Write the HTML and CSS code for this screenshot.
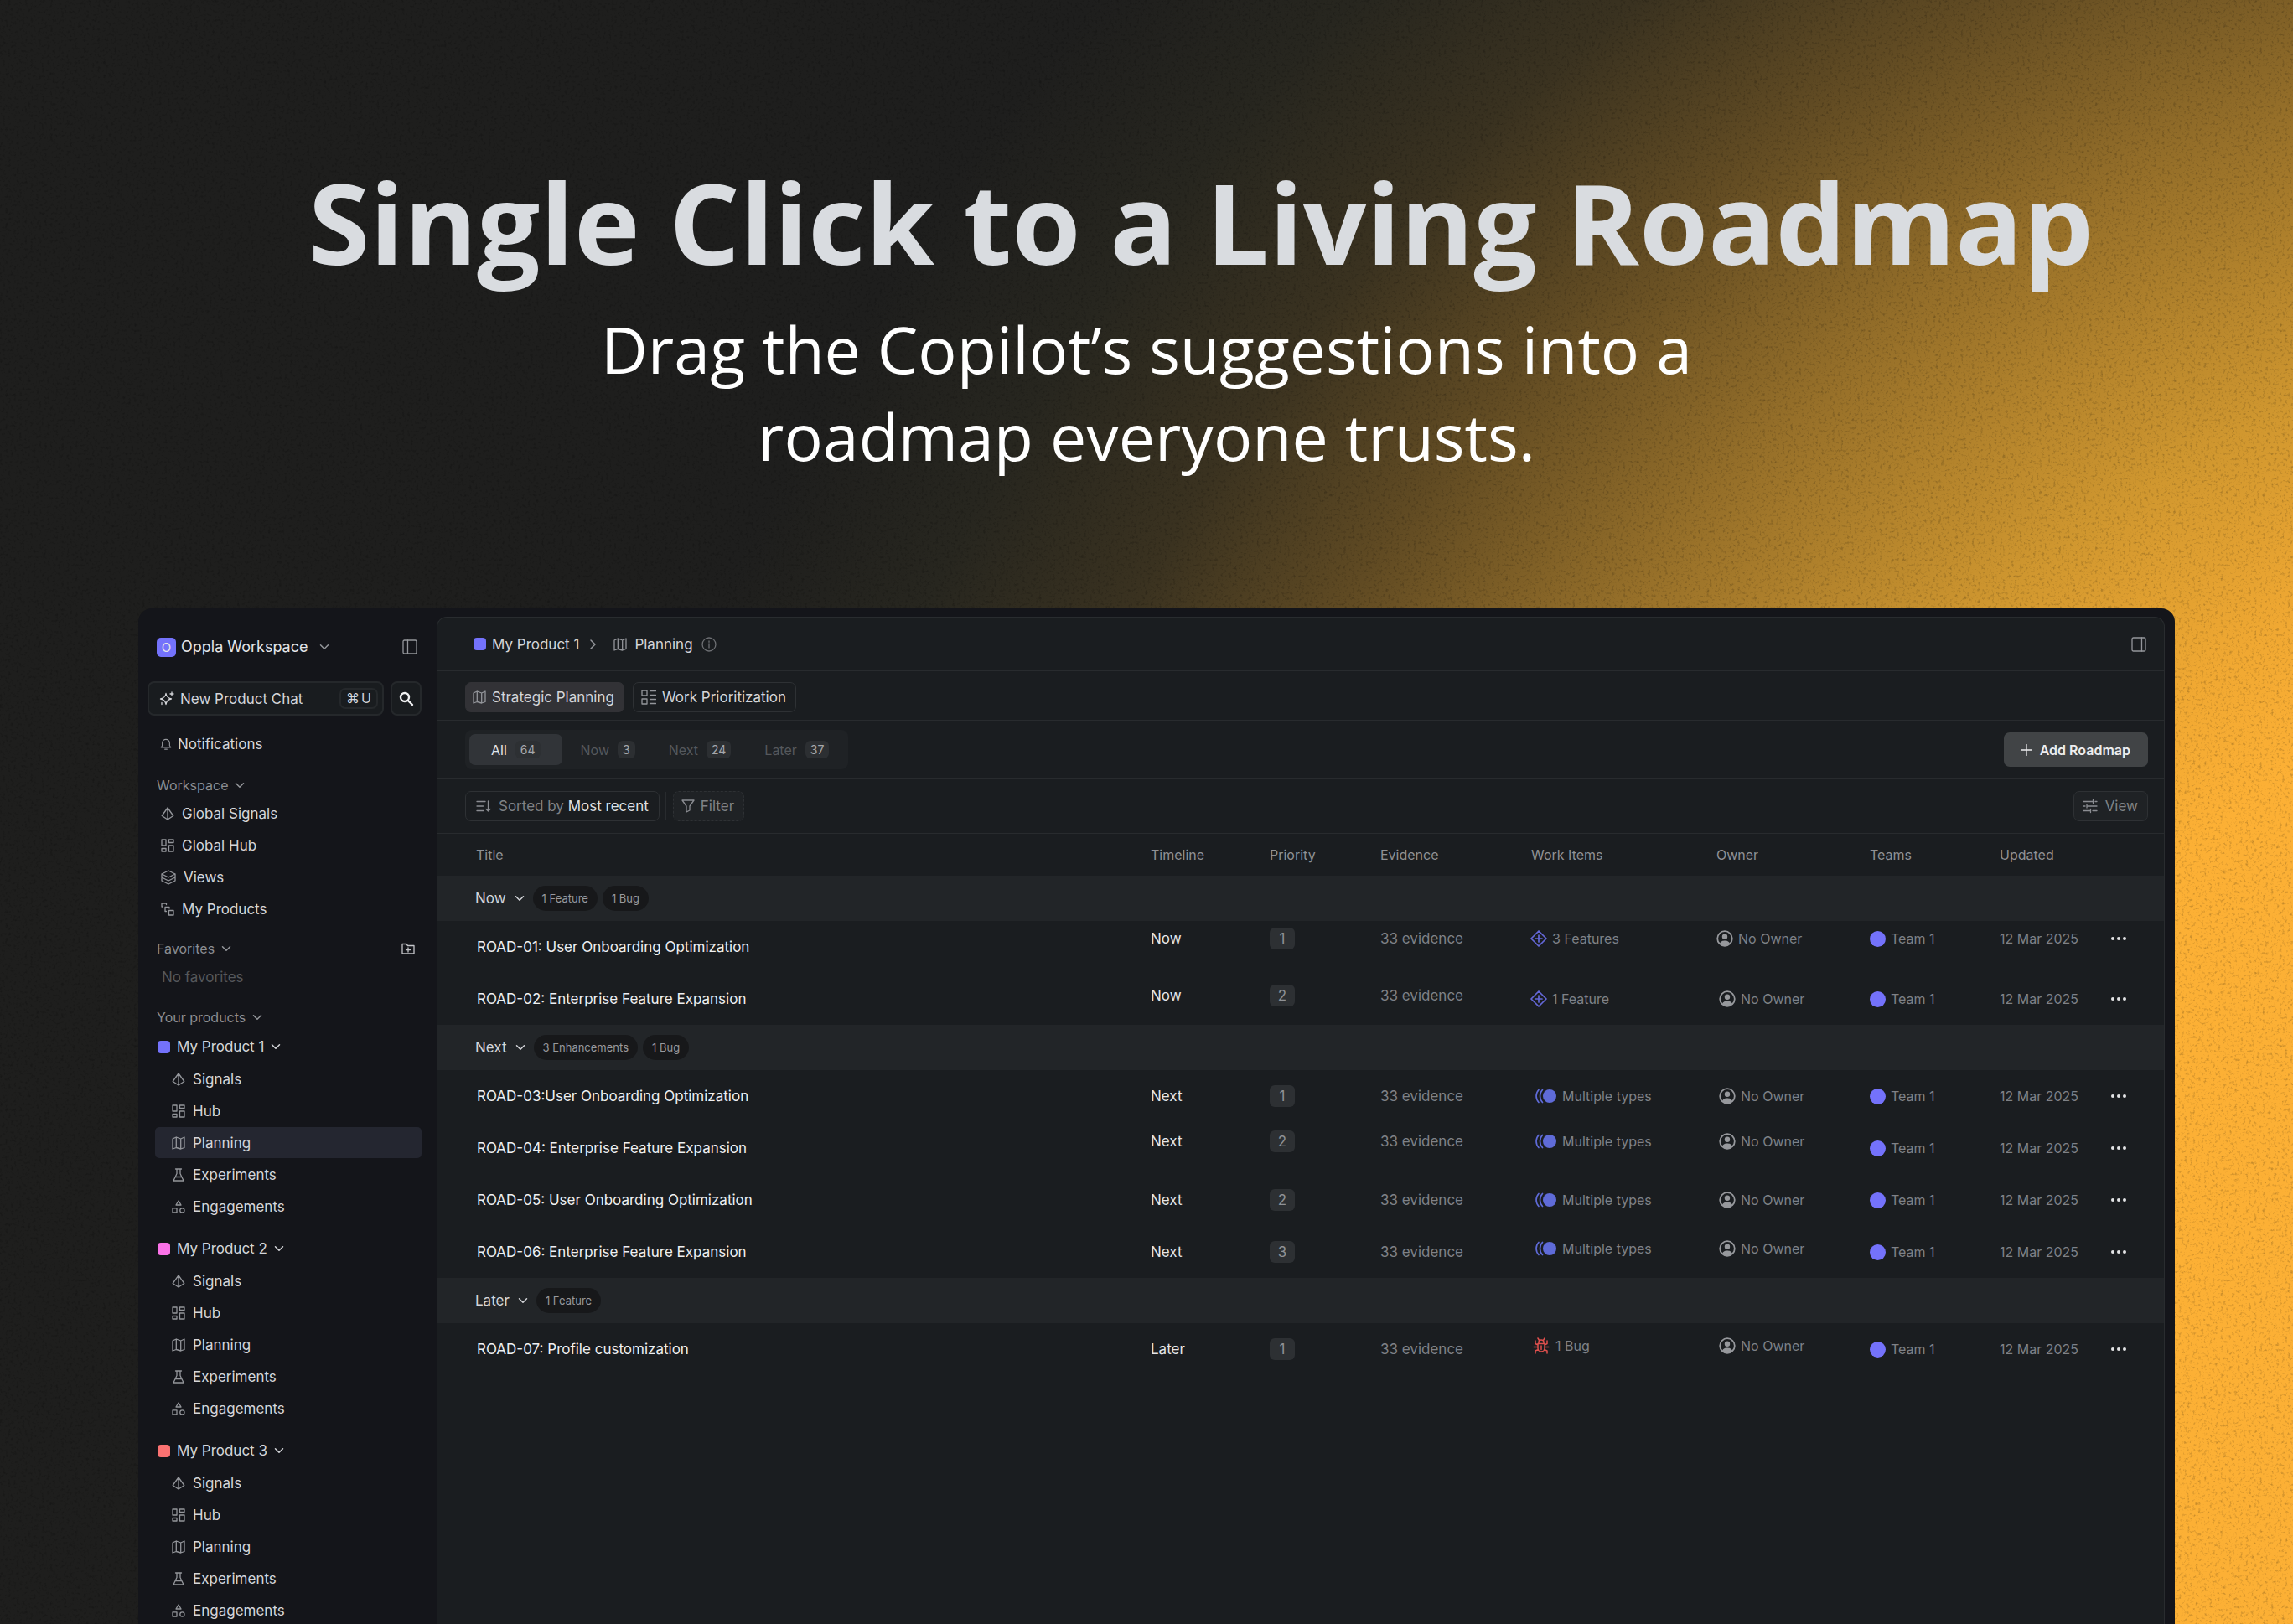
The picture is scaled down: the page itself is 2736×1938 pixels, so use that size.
FILE: index.html
```
<!DOCTYPE html>
<html lang="en">
  <head>
    <meta charset="UTF-8" />
    <title>Oppla - Planning</title>
    <link rel="stylesheet" href="styles.css">
  </head>
  <body>
    <!-- icon set -->
    <svg class="sprite" aria-hidden="true">
      <symbol id="i-chevron" viewBox="0 0 12 12"><path d="M1.5 3.8 6 8.3l4.500-4.500" /></symbol>
      <symbol id="i-right" viewBox="0 0 12 12"><path d="M4 1l5 5-5 5" /></symbol>
      <symbol id="i-panel" viewBox="0 0 18 18"><rect x="1" y="1" width="16" height="16" rx="1.500" /><path d="M6.500 1v16" /></symbol>
      <symbol id="i-panel-right" viewBox="0 0 18 18"><rect x="1" y="1" width="16" height="16" rx="1.500" /><path d="M12.500 1v16" /></symbol>
      <symbol id="i-spark" viewBox="0 0 18 18"><path d="M8 2.500c.8 4.200 2.200 5.700 6.500 6.500-4.300.8-5.700 2.300-6.500 6.500C7.200 11.300 5.700 9.800 1.500 9 5.700 8.200 7.200 6.700 8 2.500zM15 1v4M13 3h4M3 13.500v2" /></symbol>
      <symbol id="i-search" viewBox="0 0 18 18"><circle cx="7" cy="7" r="5" /><path d="M10.800 10.800 16 16" /></symbol>
      <symbol id="i-bell" viewBox="0 0 16 16"><path d="M1.500 12.500h13L13 10V6.500a5 5 0 0 0-10 0V10zM6.500 15h3" /></symbol>
      <symbol id="i-signal" viewBox="0 0 16 16"><path d="M8 1 1.200 10.500 8 15l6.800-4.500zM8 1v14" /></symbol>
      <symbol id="i-hub" viewBox="0 0 16 16"><path d="M1 1h5v7H1zM9.500 1H15v3.500H9.500zM1 11.500h5V15H1zM9.500 8H15v7H9.500z" /></symbol>
      <symbol id="i-layers" viewBox="0 0 18 18"><path d="M9 1 1 5l8 4 8-4zM1 9l8 4 8-4M1 13l8 4 8-4M1 5v4M17 5v4M1 9v4M17 9v4" /></symbol>
      <symbol id="i-steps" viewBox="0 0 16 16"><path d="M9.500 9.500H15V15H9.500zM6.500 10.500H5V5.500h5v1.500M2 5H1V1h5.500v1.500" /></symbol>
      <symbol id="i-folder" viewBox="0 0 16 16"><path d="M1 2.500h5l1.500 2H15v9.500H1zM8 7v5M5.500 9.500h5" /></symbol>
      <symbol id="i-map" viewBox="0 0 16 16"><path d="M1 3 5.300 1v12.500L1 15zM5.300 1l5.400 2v12l-5.400-1.500M10.700 3 15 1v12.500L10.700 15" /></symbol>
      <symbol id="i-flask" viewBox="0 0 14 16"><path d="M3.500 1h7M5 1v5.500L1 15h12L9 6.500V1M3.500 10.500h7" /></symbol>
      <symbol id="i-shapes" viewBox="0 0 16 16"><path d="M8 1 5 6h6zM1 9.800h5V15H1z" /><circle cx="12.400" cy="12.400" r="2.600" /></symbol>
      <symbol id="i-info" viewBox="0 0 18 18"><circle cx="9" cy="9" r="8" /><path d="M9 8v5M9 5v1.300" /></symbol>
      <symbol id="i-board" viewBox="0 0 18 18"><path d="M1 1h6v6H1zM1 11h6v6H1zM10.500 1.500H17.500M10.500 6.500H17.500M10.500 11.500H17.500M10.500 16.500H17.500" /></symbol>
      <symbol id="i-sort" viewBox="0 0 18 16"><path d="M1 2.500h10M1 8h7.500M1 13.500h8M14.500 2v12M12 11.500l2.500 2.500 2.500-2.500" /></symbol>
      <symbol id="i-filter" viewBox="0 0 16 16"><path d="M1 1h14L10 8v5l-4 2V8z" /></symbol>
      <symbol id="i-tune" viewBox="0 0 18 16"><path d="M1 2.500h11M15 2.500h2M12.500.500v4M1 8h2M6 8h11M5 6v4M1 13.500h8M12 13.500h5M9.500 11.500v4" /></symbol>
      <symbol id="i-plus" viewBox="0 0 14 14"><path d="M7 .500v13M.500 7h13" /></symbol>
      <symbol id="i-feature" viewBox="0 0 20 20"><path d="M10 1 19 10 10 19 1 10zM10 6v8M6 10h8" /></symbol>
      <symbol id="i-multi" viewBox="0 0 28 18"><circle cx="19" cy="9" r="8" fill="currentColor" stroke="none" /><path d="M12 1.500a11 11 0 0 0 0 15M7.500 1.500a11 11 0 0 0 0 15" transform="translate(-1.500 0)" /></symbol>
      <symbol id="i-bug" viewBox="0 0 20 20"><path d="M6 7.500h8V13a4 4 0 0 1-8 0zM7 7.500V6a3 3 0 0 1 6 0v1.500M7.500 3.500 6 1M12.500 3.500 14 1M6 9 3 7.500V4M14 9l3-1.500V4M6 11.500H1M14 11.500h5M6.500 14.500 3 16v3M13.500 14.500 17 16v3M10 10v4.500" /></symbol>
      <symbol id="i-user" viewBox="0 0 20 20"><circle cx="10" cy="10" r="8.800" /><g fill="currentColor" stroke="none"><circle cx="10" cy="7.800" r="3.200" /><path d="M4 16c1-3 3.500-3.600 6-3.600s5 .6 6 3.600c-3.500 3.500-8.500 3.500-12 0z" /></g></symbol>
      <symbol id="i-dots" viewBox="0 0 18 4"><g fill="currentColor" stroke="none"><circle cx="2" cy="2" r="2" /><circle cx="9" cy="2" r="2" /><circle cx="16" cy="2" r="2" /></g></symbol>
    </svg>

    <div class="page">
      <svg class="grain" aria-hidden="true">
        <filter id="noise" x="0" y="0" width="100%" height="100%">
          <feTurbulence type="fractalNoise" baseFrequency="0.3" numOctaves="3" seed="4" />
          <feColorMatrix values="0 0 0 0 0  0 0 0 0 0  0 0 0 0 0  3 0 0 0 -1.6" />
        </filter>
        <rect width="100%" height="100%" filter="url(#noise)" />
      </svg>

      <header class="hero">
        <h1>Single Click to a Living Roadmap</h1>
        <p>Drag the Copilot’s suggestions into a<br>roadmap everyone trusts.</p>
      </header>

      <div class="app">
        <aside class="sidebar">
          <div class="workspace">
            <button class="workspace-name"><span class="logo">O</span>Oppla Workspace<svg class="icon caret"><use href="#i-chevron" /></svg></button>
            <button class="icon-btn" aria-label="Toggle sidebar"><svg class="icon md"><use href="#i-panel" /></svg></button>
          </div>
          <div class="chat">
            <button class="chat-btn"><svg class="icon md"><use href="#i-spark" /></svg>New Product Chat<kbd><span>⌘</span><span>U</span></kbd></button>
            <button class="search-btn" aria-label="Search"><svg class="icon md bold"><use href="#i-search" /></svg></button>
          </div>
          <nav>
            <a class="item notifications" href="#"><svg class="icon sm"><use href="#i-bell" /></svg>Notifications</a>

            <div class="label first"><button>Workspace<svg class="icon caret"><use href="#i-chevron" /></svg></button></div>
            <div class="list">
              <a class="item" href="#"><svg class="icon"><use href="#i-signal" /></svg>Global Signals</a>
              <a class="item" href="#"><svg class="icon"><use href="#i-hub" /></svg>Global Hub</a>
              <a class="item" href="#"><svg class="icon md"><use href="#i-layers" /></svg>Views</a>
              <a class="item" href="#"><svg class="icon"><use href="#i-steps" /></svg>My Products</a>
            </div>

            <div class="label"><button>Favorites<svg class="icon caret"><use href="#i-chevron" /></svg></button>
              <button class="icon-btn folder" aria-label="New folder"><svg class="icon"><use href="#i-folder" /></svg></button></div>
            <p class="empty">No favorites</p>

            <div class="label"><button>Your products<svg class="icon caret"><use href="#i-chevron" /></svg></button></div>
            <div class="product">
              <button class="product-name"><span class="swatch"></span>My Product 1<svg class="icon caret"><use href="#i-chevron" /></svg></button>
              <div class="list sub">
                <a class="item" href="#"><svg class="icon"><use href="#i-signal" /></svg>Signals</a>
                <a class="item" href="#"><svg class="icon"><use href="#i-hub" /></svg>Hub</a>
                <a class="item active" href="#"><svg class="icon"><use href="#i-map" /></svg>Planning</a>
                <a class="item" href="#"><svg class="icon"><use href="#i-flask" /></svg>Experiments</a>
                <a class="item" href="#"><svg class="icon"><use href="#i-shapes" /></svg>Engagements</a>
              </div>
            </div>
            <div class="product">
              <button class="product-name"><span class="swatch pink"></span>My Product 2<svg class="icon caret"><use href="#i-chevron" /></svg></button>
              <div class="list sub">
                <a class="item" href="#"><svg class="icon"><use href="#i-signal" /></svg>Signals</a>
                <a class="item" href="#"><svg class="icon"><use href="#i-hub" /></svg>Hub</a>
                <a class="item" href="#"><svg class="icon"><use href="#i-map" /></svg>Planning</a>
                <a class="item" href="#"><svg class="icon"><use href="#i-flask" /></svg>Experiments</a>
                <a class="item" href="#"><svg class="icon"><use href="#i-shapes" /></svg>Engagements</a>
              </div>
            </div>
            <div class="product">
              <button class="product-name"><span class="swatch red"></span>My Product 3<svg class="icon caret"><use href="#i-chevron" /></svg></button>
              <div class="list sub">
                <a class="item" href="#"><svg class="icon"><use href="#i-signal" /></svg>Signals</a>
                <a class="item" href="#"><svg class="icon"><use href="#i-hub" /></svg>Hub</a>
                <a class="item" href="#"><svg class="icon"><use href="#i-map" /></svg>Planning</a>
                <a class="item" href="#"><svg class="icon"><use href="#i-flask" /></svg>Experiments</a>
                <a class="item" href="#"><svg class="icon"><use href="#i-shapes" /></svg>Engagements</a>
              </div>
            </div>
          </nav>
        </aside>

        <main class="main">
          <div class="bar topbar">
            <div class="crumbs">
              <a href="#"><span class="swatch"></span>My Product 1</a>
              <svg class="icon caret"><use href="#i-right" /></svg>
              <a class="current" href="#"><svg class="icon"><use href="#i-map" /></svg>Planning</a>
              <svg class="icon md info"><use href="#i-info" /></svg>
            </div>
            <button class="icon-btn" aria-label="Toggle details"><svg class="icon md"><use href="#i-panel-right" /></svg></button>
          </div>

          <div class="bar modes">
            <button class="btn filled"><svg class="icon"><use href="#i-map" /></svg>Strategic Planning</button>
            <button class="btn"><svg class="icon md"><use href="#i-board" /></svg>Work Prioritization</button>
          </div>

          <div class="bar stages">
            <div class="segments">
              <button class="segment selected">All<span class="count">64</span></button>
              <button class="segment">Now<span class="count">3</span></button>
              <button class="segment">Next<span class="count">24</span></button>
              <button class="segment">Later<span class="count">37</span></button>
            </div>
            <button class="add"><svg class="icon sm"><use href="#i-plus" /></svg>Add Roadmap</button>
          </div>

          <div class="bar tools">
            <button class="btn muted sort"><svg class="icon md"><use href="#i-sort" /></svg><span>Sorted by <b>Most recent</b></span></button>
            <span class="divider"></span>
            <button class="btn muted dashed"><svg class="icon"><use href="#i-filter" /></svg>Filter</button>
            <button class="btn muted view"><svg class="icon md"><use href="#i-tune" /></svg>View</button>
          </div>

          <table class="roadmap">
            <colgroup>
              <col><col class="c-timeline"><col class="c-priority"><col class="c-evidence"><col class="c-items"><col class="c-owner"><col class="c-teams"><col class="c-updated"><col class="c-more">
            </colgroup>
            <thead>
              <tr><th>Title</th><th>Timeline</th><th>Priority</th><th>Evidence</th><th>Work Items</th><th>Owner</th><th>Teams</th><th>Updated</th><th></th></tr>
            </thead>
            <tbody>
              <tr class="group"><th colspan="9"><div class="group-head"><button>Now<svg class="icon caret"><use href="#i-chevron" /></svg></button><span class="pill">1 Feature</span><span class="pill">1 Bug</span></div></th></tr>
              <tr class="raised">
                <td class="title">ROAD-01: User Onboarding Optimization</td>
                <td class="timeline">Now</td>
                <td><span class="priority">1</span></td>
                <td class="evidence">33 evidence</td>
                <td><span class="cell"><svg class="icon lg feature"><use href="#i-feature" /></svg>3 Features</span></td>
                <td><span class="cell"><svg class="icon lg user"><use href="#i-user" /></svg>No Owner</span></td>
                <td><span class="cell"><span class="team"></span>Team 1</span></td>
                <td>12 Mar 2025</td>
                <td><button class="more" aria-label="More"><svg class="icon dots"><use href="#i-dots" /></svg></button></td>
              </tr>
              <tr>
                <td class="title">ROAD-02: Enterprise Feature Expansion</td>
                <td class="timeline lift">Now</td>
                <td class="lift"><span class="priority">2</span></td>
                <td class="evidence lift">33 evidence</td>
                <td><span class="cell"><svg class="icon lg feature"><use href="#i-feature" /></svg>1 Feature</span></td>
                <td class="owner"><span class="cell"><svg class="icon lg user"><use href="#i-user" /></svg>No Owner</span></td>
                <td><span class="cell"><span class="team"></span>Team 1</span></td>
                <td>12 Mar 2025</td>
                <td><button class="more" aria-label="More"><svg class="icon dots"><use href="#i-dots" /></svg></button></td>
              </tr>
            </tbody>
            <tbody>
              <tr class="group"><th colspan="9"><div class="group-head"><button>Next<svg class="icon caret"><use href="#i-chevron" /></svg></button><span class="pill">3 Enhancements</span><span class="pill">1 Bug</span></div></th></tr>
              <tr>
                <td class="title">ROAD-03:User Onboarding Optimization</td>
                <td class="timeline">Next</td>
                <td><span class="priority">1</span></td>
                <td class="evidence">33 evidence</td>
                <td><span class="cell"><svg class="icon multi"><use href="#i-multi" /></svg>Multiple types</span></td>
                <td class="owner"><span class="cell"><svg class="icon lg user"><use href="#i-user" /></svg>No Owner</span></td>
                <td><span class="cell"><span class="team"></span>Team 1</span></td>
                <td>12 Mar 2025</td>
                <td><button class="more" aria-label="More"><svg class="icon dots"><use href="#i-dots" /></svg></button></td>
              </tr>
              <tr>
                <td class="title">ROAD-04: Enterprise Feature Expansion</td>
                <td class="timeline lift-2">Next</td>
                <td class="lift-2"><span class="priority">2</span></td>
                <td class="evidence lift-2">33 evidence</td>
                <td class="lift-2"><span class="cell"><svg class="icon multi"><use href="#i-multi" /></svg>Multiple types</span></td>
                <td class="owner lift-2"><span class="cell"><svg class="icon lg user"><use href="#i-user" /></svg>No Owner</span></td>
                <td><span class="cell"><span class="team"></span>Team 1</span></td>
                <td>12 Mar 2025</td>
                <td><button class="more" aria-label="More"><svg class="icon dots"><use href="#i-dots" /></svg></button></td>
              </tr>
              <tr>
                <td class="title">ROAD-05: User Onboarding Optimization</td>
                <td class="timeline">Next</td>
                <td><span class="priority">2</span></td>
                <td class="evidence">33 evidence</td>
                <td><span class="cell"><svg class="icon multi"><use href="#i-multi" /></svg>Multiple types</span></td>
                <td class="owner"><span class="cell"><svg class="icon lg user"><use href="#i-user" /></svg>No Owner</span></td>
                <td><span class="cell"><span class="team"></span>Team 1</span></td>
                <td>12 Mar 2025</td>
                <td><button class="more" aria-label="More"><svg class="icon dots"><use href="#i-dots" /></svg></button></td>
              </tr>
              <tr>
                <td class="title">ROAD-06: Enterprise Feature Expansion</td>
                <td class="timeline">Next</td>
                <td><span class="priority">3</span></td>
                <td class="evidence">33 evidence</td>
                <td class="lift"><span class="cell"><svg class="icon multi"><use href="#i-multi" /></svg>Multiple types</span></td>
                <td class="owner lift"><span class="cell"><svg class="icon lg user"><use href="#i-user" /></svg>No Owner</span></td>
                <td><span class="cell"><span class="team"></span>Team 1</span></td>
                <td>12 Mar 2025</td>
                <td><button class="more" aria-label="More"><svg class="icon dots"><use href="#i-dots" /></svg></button></td>
              </tr>
            </tbody>
            <tbody>
              <tr class="group"><th colspan="9"><div class="group-head"><button>Later<svg class="icon caret"><use href="#i-chevron" /></svg></button><span class="pill">1 Feature</span></div></th></tr>
              <tr>
                <td class="title">ROAD-07: Profile customization</td>
                <td class="timeline">Later</td>
                <td><span class="priority">1</span></td>
                <td class="evidence">33 evidence</td>
                <td class="lift"><span class="cell bug"><svg class="icon lg"><use href="#i-bug" /></svg>1 Bug</span></td>
                <td class="owner lift"><span class="cell"><svg class="icon lg user"><use href="#i-user" /></svg>No Owner</span></td>
                <td><span class="cell"><span class="team"></span>Team 1</span></td>
                <td>12 Mar 2025</td>
                <td><button class="more" aria-label="More"><svg class="icon dots"><use href="#i-dots" /></svg></button></td>
              </tr>
            </tbody>
          </table>
        </main>
      </div>
    </div>
  </body>
</html>
```
FILE: styles.css
```
* {
  box-sizing: border-box;
}
body {
  margin: 0;
  font-family: Inter, sans-serif;
  font-size: 17px;
  line-height: 24px;
  color: #d4d5d9;
  background-color: #1d1d1c;
}
button {
  display: flex;
  align-items: center;
  margin: 0;
  padding: 0;
  border: 0;
  background: none;
  color: inherit;
  font: inherit;
  cursor: pointer;
}
a {
  color: inherit;
  text-decoration: none;
}
.sprite {
  display: none;
}

.page {
  position: relative;
  display: flex;
  flex-direction: column;
  height: 100vh;
  overflow: hidden;
  background: radial-gradient(circle at 121% 90%, #fcb035 27%, #f0a832 31%, #d0972f 37%, #946e29 46%, #614b23 53%, #3a3220 59%, #27261f 65%, #1e1e1d 71%);
}
.grain {
  position: absolute;
  inset: 0;
  width: 100%;
  height: 100%;
  opacity: 0.2;
}

/* hero */
.hero {
  position: relative;
  padding-top: 175px;
  margin-bottom: 153px;
  font-family: "Open Sans", sans-serif;
  text-align: center;
}
.hero h1 {
  margin: 0 0 10px;
  padding-left: 130px;
  font-size: 133px;
  line-height: 180px;
  font-weight: 700;
  color: #d9dce0;
}
.hero p {
  margin: 0;
  font-size: 77px;
  line-height: 104px;
  color: #fff;
}

/* icons */
.icon {
  flex: none;
  width: 16px;
  height: 16px;
  fill: none;
  stroke: currentColor;
  stroke-width: 1.3;
  stroke-linejoin: round;
  stroke-linecap: round;
  color: #94969b;
}
.icon.sm {
  width: 14px;
  height: 14px;
}
.icon.md {
  width: 18px;
  height: 18px;
}
.icon.lg {
  width: 20px;
  height: 20px;
}
.icon.caret {
  width: 12px;
  height: 12px;
  stroke-width: 1.5;
}
.icon.bold {
  stroke-width: 2.4;
  color: #f0f0f2;
}
.icon.multi {
  width: 28px;
  height: 18px;
  stroke-width: 1.7;
  color: #5f6bd8;
}
.icon.dots {
  width: 18px;
  height: 4px;
  color: #e3e4e6;
}
.swatch {
  width: 15px;
  height: 15px;
  border-radius: 4px;
  background-color: #7472fb;
}
.swatch.pink {
  background-color: #fb72e8;
}
.swatch.red {
  background-color: #fb7272;
}

/* app window */
.app {
  position: relative;
  flex: 1;
  display: flex;
  min-height: 0;
  margin: 0 141px 0 165px;
  padding: 0 12px 0 0;
  border-radius: 16px 16px 0 0;
  background-color: #14151a;
  overflow: hidden;
}

/* sidebar */
.sidebar {
  width: 356px;
  flex: none;
  padding: 26px 18px 0 11px;
}
.workspace {
  display: flex;
  align-items: center;
  justify-content: space-between;
  height: 40px;
  padding: 0 5px 0 11px;
}
.workspace-name {
  gap: 6px;
  font-size: 18px;
  color: #e4e5e8;
}
.workspace-name .caret {
  margin-left: 8px;
}
.logo {
  width: 23px;
  height: 23px;
  border-radius: 5px;
  background-color: #7472fb;
  font-size: 15px;
  line-height: 23px;
  text-align: center;
}
.chat {
  display: flex;
  gap: 8px;
  margin-top: 21px;
}
.chat-btn,
.search-btn {
  height: 41px;
  border: 2px solid #25282b;
  border-radius: 8px;
  background-color: #191c1f;
}
.chat-btn {
  flex: 1;
  gap: 7px;
  padding: 0 5px 0 12px;
}
.chat-btn .icon {
  color: #d4d5d9;
}
.search-btn {
  width: 37px;
  justify-content: center;
}
kbd {
  display: flex;
  gap: 2px;
  margin-left: auto;
  padding: 0 6px;
  border: 2px solid #25282b;
  border-radius: 7px;
  font-family: Inter, "DejaVu Sans", sans-serif;
  font-size: 16px;
  line-height: 21px;
}
.item {
  display: flex;
  align-items: center;
  gap: 9px;
  height: 37px;
  margin-left: 9px;
  padding-left: 7px;
  border-radius: 5px;
}
.item.active {
  background-color: #242630;
}
.notifications {
  gap: 7px;
  margin-top: 15px;
  padding-left: 6px;
}
.label {
  display: flex;
  align-items: center;
  justify-content: space-between;
  height: 30px;
  margin-top: 14px;
  padding: 0 8px 0 11px;
  font-size: 16px;
  color: #8b8d92;
}
.label.first {
  margin-top: 16px;
}
.label button {
  gap: 8px;
}
.folder .icon {
  color: #c4c5c9;
}
.list {
  display: flex;
  flex-direction: column;
  gap: 1px;
}
.sub .item {
  padding-left: 20px;
}
.empty {
  margin: 0;
  padding-left: 17px;
  line-height: 38px;
  color: #55575b;
}
.product {
  margin-bottom: 12px;
}
.product-name {
  gap: 8px;
  height: 40px;
  padding-left: 12px;
}
.product-name .caret {
  color: #d4d5d9;
}

/* main panel */
.main {
  flex: 1;
  min-width: 0;
  margin-top: 10px;
  border: 1px solid #292c2f;
  border-bottom: 0;
  border-radius: 12px 12px 0 0;
  background-color: #1a1d20;
}
.bar {
  display: flex;
  align-items: center;
  padding: 0 19px 0 33px;
  border-bottom: 1px solid #282b2e;
}
.topbar {
  justify-content: space-between;
  height: 64px;
  padding: 0 21px 0 43px;
}
.crumbs,
.crumbs a {
  display: flex;
  align-items: center;
}
.crumbs a {
  gap: 7px;
}
.crumbs .caret {
  margin: 0 19px 0 10px;
}
.crumbs .current {
  gap: 9px;
}
.crumbs .info {
  margin-left: 10px;
  color: #6d6f73;
}
.modes {
  gap: 10px;
  height: 59px;
  padding-top: 3px;
}
.btn {
  gap: 7px;
  height: 36px;
  padding: 0 11px 0 9px;
  border: 1px solid #2e3134;
  border-radius: 7px;
}
.btn.filled {
  padding-left: 8px;
  border-color: #323236;
  background-color: #323236;
}
.stages {
  justify-content: space-between;
  height: 70px;
}
.segments {
  display: flex;
  gap: 4px;
  padding: 5px;
  border-radius: 8px;
  background-color: #1f2225;
}
.segment {
  gap: 10px;
  height: 37px;
  padding: 0 18px;
  border-radius: 7px;
  font-size: 16px;
  color: #55585c;
}
.segment.selected {
  padding: 0 26px;
  background-color: #313438;
  color: #e4e5e8;
}
.count {
  padding: 0 6px;
  border-radius: 6px;
  background-color: #2c2f32;
  font-size: 14px;
  line-height: 21px;
  color: #a5a7ab;
}
.selected .count {
  background-color: #2d3033;
}
.add {
  gap: 9px;
  height: 41px;
  padding: 0 21px 0 20px;
  border-radius: 7px;
  background-color: #414446;
  font-size: 16px;
  font-weight: 600;
  color: #ededef;
}
.add .icon {
  color: #ededef;
}
.tools {
  height: 65px;
}
.btn.muted {
  background-color: #1f2225;
  color: #7f8286;
}
.btn.muted .icon {
  color: #8b8d92;
}
.btn.sort {
  gap: 9px;
  padding: 0 12px;
  background-color: #1a1d20;
}
.sort b {
  font-weight: 400;
  color: #dfe0e3;
}
.divider {
  width: 1px;
  height: 34px;
  margin: 0 8px 0 7px;
  background-color: #282b2e;
}
.btn.dashed {
  border-style: dashed;
  border-color: #2e3134;
}
.btn.view {
  gap: 9px;
  margin-left: auto;
  padding: 0 11px 0 10px;
}

/* roadmap table */
.roadmap {
  width: 100%;
  table-layout: fixed;
  border-collapse: collapse;
}
.c-timeline { width: 142px; }
.c-priority { width: 132px; }
.c-evidence { width: 180px; }
.c-items { width: 221px; }
.c-owner { width: 183px; }
.c-teams { width: 155px; }
.c-updated { width: 133px; }
.c-more { width: 63px; }
.roadmap th,
.roadmap td {
  height: 62px;
  padding: 0;
  text-align: left;
  font-size: 16px;
  font-weight: 400;
  color: #7e8187;
  white-space: nowrap;
}
.roadmap thead th {
  height: 50px;
  color: #8f9195;
}
.roadmap thead th:first-child {
  padding-left: 46px;
}
.roadmap .group th {
  height: 54px;
  background-color: #222528;
  font-size: 17px;
  color: #d4d5d9;
}
.group-head {
  display: flex;
  align-items: center;
  gap: 6px;
  padding-left: 45px;
}
.group-head button {
  gap: 10px;
  margin-right: 4px;
}
.group-head .caret {
  color: #d4d5d9;
}
.pill {
  padding: 0 11px;
  border-radius: 15px;
  background-color: #17181a;
  font-size: 13px;
  line-height: 30px;
  color: #97999d;
}
.roadmap .title {
  padding-left: 47px;
  font-size: 17px;
  color: #eeeff1;
}
.roadmap .timeline {
  font-size: 17px;
  color: #e4e5e8;
}
.roadmap .evidence {
  font-size: 17px;
}
.roadmap .owner {
  padding-left: 3px;
}
.roadmap .lift {
  padding-bottom: 8px;
}
.roadmap .lift-2 {
  padding-bottom: 16px;
}
.roadmap .raised td {
  padding-bottom: 20px;
}
.roadmap .raised .title {
  padding-bottom: 0;
}
.priority {
  display: block;
  width: 30px;
  border-radius: 6px;
  background-color: #2d3033;
  font-size: 17px;
  line-height: 26px;
  text-align: center;
  color: #8f9195;
}
.cell {
  display: flex;
  align-items: center;
  gap: 6px;
}
.cell .feature {
  margin-left: -1px;
  stroke-width: 1.7;
  color: #6468d8;
}
.cell .multi {
  margin-left: 3px;
}
.cell .user {
  stroke-width: 1.8;
  color: #96989c;
}
.cell.bug {
  gap: 7px;
  padding-left: 2px;
}
.bug .icon {
  stroke-width: 1.5;
  color: #e0504d;
}
.team {
  width: 19px;
  height: 19px;
  border-radius: 50%;
  background-color: #7472fb;
}
.more {
  height: 24px;
}
```
